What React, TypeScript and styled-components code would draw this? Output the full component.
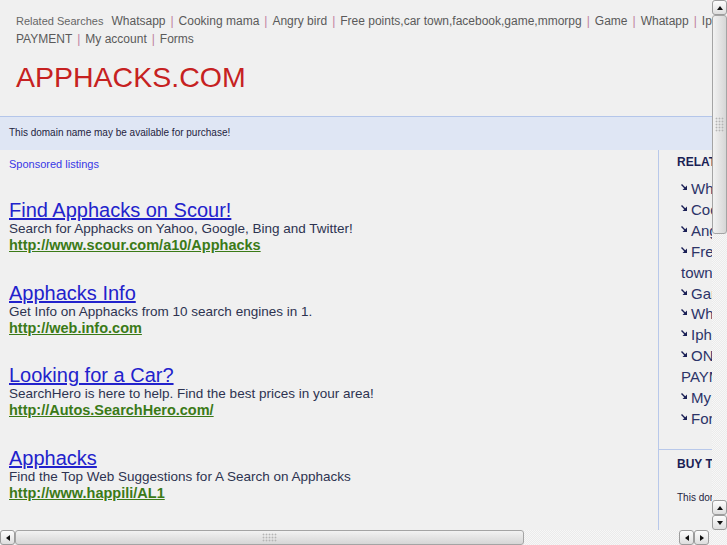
import React from 'react';
import styled, { createGlobalStyle } from 'styled-components';

/* Data
---------------------------------- */

const related = [
	'Whatsapp',
	'Cooking mama',
	'Angry bird',
	'Free points,car town,facebook,game,mmorpg',
	'Game',
	'Whatapp',
	'Iphone',
	'ONLINE PAYMENT',
	'My account',
	'Forms',
];

const listings = [
	{
		title: 'Find Apphacks on Scour!',
		text: 'Search for Apphacks on Yahoo, Google, Bing and Twitter!',
		url: 'http://www.scour.com/a10/Apphacks',
	},
	{
		title: 'Apphacks Info',
		text: 'Get Info on Apphacks from 10 search engines in 1.',
		url: 'http://web.info.com',
	},
	{
		title: 'Looking for a Car?',
		text: 'SearchHero is here to help. Find the best prices in your area!',
		url: 'http://Autos.SearchHero.com/',
	},
	{
		title: 'Apphacks',
		text: 'Find the Top Web Suggestions for A Search on Apphacks',
		url: 'http://www.happili/AL1',
	},
];

/* Style
---------------------------------- */

const GlobalStyle = createGlobalStyle`
	html, body {
		margin: 0;
		padding: 0;
		overflow: hidden;
	}

	body {
		font-family: "Liberation Sans", Arial, sans-serif;
		background-color: #f0f0f0;
	}
`;

const Frame = styled.div`
	width: 727px;
	height: 545px;
	display: grid;
	grid-template-columns: 712px 15px;
	grid-template-rows: 530px 15px;
`;

const Viewport = styled.div`
	overflow: hidden;
	background-color: #f0f0f0;
`;

const Page = styled.div`
	width: 860px;
`;

const Header = styled.header`
	padding: 12px 16px 23px 16px;
`;

const RelatedLine = styled.div`
	font-size: 12px;
	line-height: 18px;
	color: #5a5a5a;

	.label {
		font-size: 11px;
		color: #666;
		margin-right: 8px;
	}

	.pipe {
		color: #bf7f9f;
		margin: 0 5px;
	}
`;

const SiteTitle = styled.h1`
	margin: 13px 0 0 0;
	font-size: 28.5px;
	line-height: 32px;
	font-weight: normal;
	color: #c62121;
`;

const Band = styled.div`
	height: 33px;
	border-top: 1px solid #b4c6ea;
	background-color: #dfe6f4;
	padding-left: 9px;
	font-size: 10px;
	line-height: 32px;
	color: #1e2340;
`;

const Main = styled.div`
	display: flex;
	align-items: stretch;
`;

const Results = styled.div`
	width: 640px;
	flex-shrink: 0;
	padding: 8px 9px 0 9px;

	.sponsored {
		font-size: 11px;
		line-height: 13px;
		color: #3737e6;
		margin-bottom: 28px;
	}
`;

const Listing = styled.div`
	margin-bottom: 27.7px;

	.title {
		display: block;
		width: fit-content;
		font-size: 20px;
		line-height: 22px;
		color: #2222cc;
		text-decoration: underline;
	}

	.text {
		font-size: 13.5px;
		line-height: 16px;
		color: #2d3350;
	}

	.url {
		display: block;
		width: fit-content;
		font-size: 14.5px;
		line-height: 17px;
		font-weight: bold;
		color: #3b7a17;
		text-decoration: underline;
	}
`;

const Sidebar = styled.aside`
	flex-shrink: 0;
	width: 200px;
	min-height: 380px;
	border-left: 1px solid #b8c8ea;
`;

const SideBlock = styled.div<{ $divided?: boolean }>`
	padding: ${({ $divided }) => ($divided ? '7px 18px 0 18px' : '5px 18px 0 18px')};
	border-top: ${({ $divided }) => ($divided ? '1px solid #b8c8ea' : 'none')};
	width: 125px;
	box-sizing: content-box;

	.heading {
		font-size: 12px;
		line-height: 14px;
		font-weight: bold;
		color: #1a1f55;
		white-space: nowrap;
	}

	.note {
		margin-top: 21px;
		font-size: 10px;
		line-height: 12px;
		color: #1e2340;
		white-space: nowrap;
	}
`;

const SideList = styled.ul`
	list-style: none;
	margin: 10px 0 19px 0;
	padding: 0 0 0 4px;

	li {
		font-size: 15px;
		line-height: 20.9px;
		color: #2c3468;
	}
`;

const Arrow = styled.svg`
	width: 6px;
	height: 6px;
	margin-right: 4px;
	vertical-align: 4px;
`;

/* Scrollbars
---------------------------------- */

const Track = styled.div<{ $vertical?: boolean }>`
	display: flex;
	flex-direction: ${({ $vertical }) => ($vertical ? 'column' : 'row')};
	background-color: #f3f3f3;
	background-image: repeating-conic-gradient(#ebebeb 0% 25%, #f7f7f7 0% 50%);
	background-size: 2px 2px;
	overflow: hidden;
`;

const Corner = styled.div`
	background-color: #f3f3f3;
	background-image: repeating-conic-gradient(#ececec 0% 25%, #f8f8f8 0% 50%);
	background-size: 2px 2px;
`;

const ScrollButton = styled.div<{ $dir: 'up' | 'down' | 'left' | 'right' }>`
	width: 13px;
	height: 13px;
	flex-shrink: 0;
	border: 1px solid #9c9c9c;
	border-radius: 3px;
	background: linear-gradient(#fdfdfd, #dedede);
	display: flex;
	align-items: center;
	justify-content: center;

	&::after {
		content: '';
		width: 0;
		height: 0;
		border-style: solid;
		border-color: transparent;
		${({ $dir }) =>
			$dir === 'up'
				? 'border-width: 0 3.5px 4px 3.5px; border-bottom-color: #111;'
				: $dir === 'down'
				? 'border-width: 4px 3.5px 0 3.5px; border-top-color: #111;'
				: $dir === 'left'
				? 'border-width: 3.5px 4px 3.5px 0; border-right-color: #111;'
				: 'border-width: 3.5px 0 3.5px 4px; border-left-color: #111;'}
	}
`;

const Thumb = styled.div<{ $vertical?: boolean; $size: number }>`
	flex-shrink: 0;
	box-sizing: border-box;
	${({ $vertical, $size }) => ($vertical ? `height: ${$size}px; width: 15px;` : `width: ${$size}px; height: 15px;`)}
	border: 1px solid #a4a4a4;
	border-radius: 3px;
	background: ${({ $vertical }) =>
		$vertical ? 'linear-gradient(to right, #f2f2f2, #d6d6d6)' : 'linear-gradient(#f2f2f2, #d6d6d6)'};
	display: flex;
	align-items: center;
	justify-content: center;

	.grip {
		${({ $vertical }) => ($vertical ? 'width: 9px; height: 15px;' : 'width: 15px; height: 9px;')}
		background-image: radial-gradient(circle, #b4b4b4 0.8px, transparent 1.1px);
		background-size: 3px 3px;
	}
`;

const Fill = styled.div`
	flex: 1;
`;

const Gap = styled.div`
	width: 3px;
	flex-shrink: 0;
`;

/* Component
------------------------------ */

const App = () => {
	return (
		<>
			<GlobalStyle />
			<Frame>
				<Viewport>
					<Page>
						<Header>
							<RelatedLine>
								<span className="label">Related Searches</span>
								{related.map((value, index) => (
									<React.Fragment key={`related-${index}`}>
										{index > 0 && <span className="pipe">|</span>}
										{value}
									</React.Fragment>
								))}
							</RelatedLine>
							<SiteTitle>APPHACKS.COM</SiteTitle>
						</Header>

						<Band>This domain name may be available for purchase!</Band>

						<Main>
							<Results>
								<div className="sponsored">Sponsored listings</div>
								{listings.map((value, index) => (
									<Listing key={`listing-${index}`}>
										<span className="title">{value.title}</span>
										<div className="text">{value.text}</div>
										<span className="url">{value.url}</span>
									</Listing>
								))}
							</Results>

							<Sidebar>
								<SideBlock>
									<div className="heading">RELATED SEARCHES</div>
									<SideList>
										{related.map((value, index) => (
											<li key={`side-${index}`}>
												<Arrow viewBox="0 0 6 6">
													<path d="M0.5 0.5 L4.2 4.2" stroke="#1a1f55" strokeWidth="1.4" />
													<path d="M6 1.5 L6 6 L1.5 6 Z" fill="#1a1f55" />
												</Arrow>
												{value}
											</li>
										))}
									</SideList>
								</SideBlock>
								<SideBlock $divided>
									<div className="heading">BUY THIS DOMAIN</div>
									<div className="note">This domain may be for sale.</div>
								</SideBlock>
							</Sidebar>
						</Main>
					</Page>
				</Viewport>

				<Track $vertical>
					<ScrollButton $dir="up" />
					<Thumb $vertical $size={219}>
						<span className="grip" />
					</Thumb>
					<Fill />
					<ScrollButton $dir="up" />
					<ScrollButton $dir="down" />
				</Track>

				<Track>
					<ScrollButton $dir="left" />
					<Thumb $size={509}>
						<span className="grip" />
					</Thumb>
					<Fill />
					<ScrollButton $dir="left" />
					<ScrollButton $dir="right" />
					<Gap />
				</Track>

				<Corner />
			</Frame>
		</>
	);
};

export default App;
